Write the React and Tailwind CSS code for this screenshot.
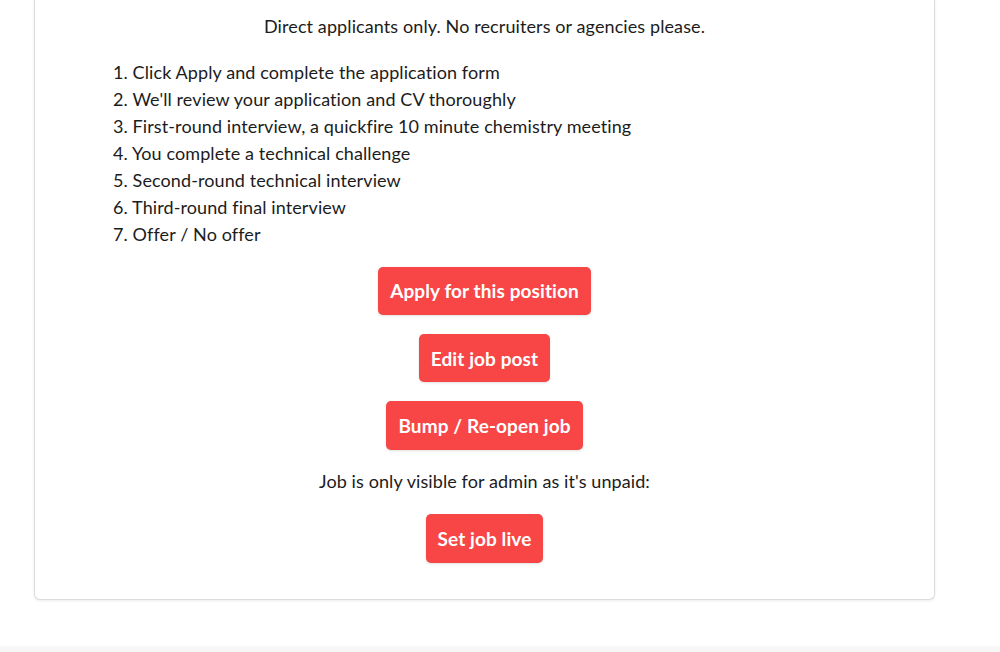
import React from 'react';

const steps = [
  'Click Apply and complete the application form',
  "We'll review your application and CV thoroughly",
  'First-round interview, a quickfire 10 minute chemistry meeting',
  'You complete a technical challenge',
  'Second-round technical interview',
  'Third-round final interview',
  'Offer / No offer',
];

const RedButton = ({ children }) => (
  <button className="rounded-[5px] bg-[#f84545] px-3 h-[48.5px] text-[19px] font-bold text-white shadow-sm">
    {children}
  </button>
);

export default function App() {
  return (
    <div className="min-h-[652px] bg-white text-[#1c1c1c]" style={{ fontFamily: 'Lato, "Open Sans", sans-serif' }}>
      <div className="ml-[34px] w-[901px] rounded-b-[6px] border border-t-0 border-[#dcdcdc] bg-white pt-[13px] pb-[36px] shadow-[0_1px_3px_rgba(0,0,0,0.08)]">
        <div className="flex flex-col items-center gap-[18.75px] text-[18px] leading-[27px] tracking-[0.1px]">
          <p>Direct applicants only. No recruiters or agencies please.</p>
          <ol className="self-stretch pl-[78px]">
            {steps.map((s, i) => (
              <li key={i}>{i + 1}. {s}</li>
            ))}
          </ol>
          <RedButton>Apply for this position</RedButton>
          <RedButton>Edit job post</RedButton>
          <RedButton>Bump / Re-open job</RedButton>
          <p>Job is only visible for admin as it's unpaid:</p>
          <RedButton>Set job live</RedButton>
        </div>
      </div>
      <div className="mt-[46px] h-[6px] bg-[#f7f7f8]" />
    </div>
  );
}
